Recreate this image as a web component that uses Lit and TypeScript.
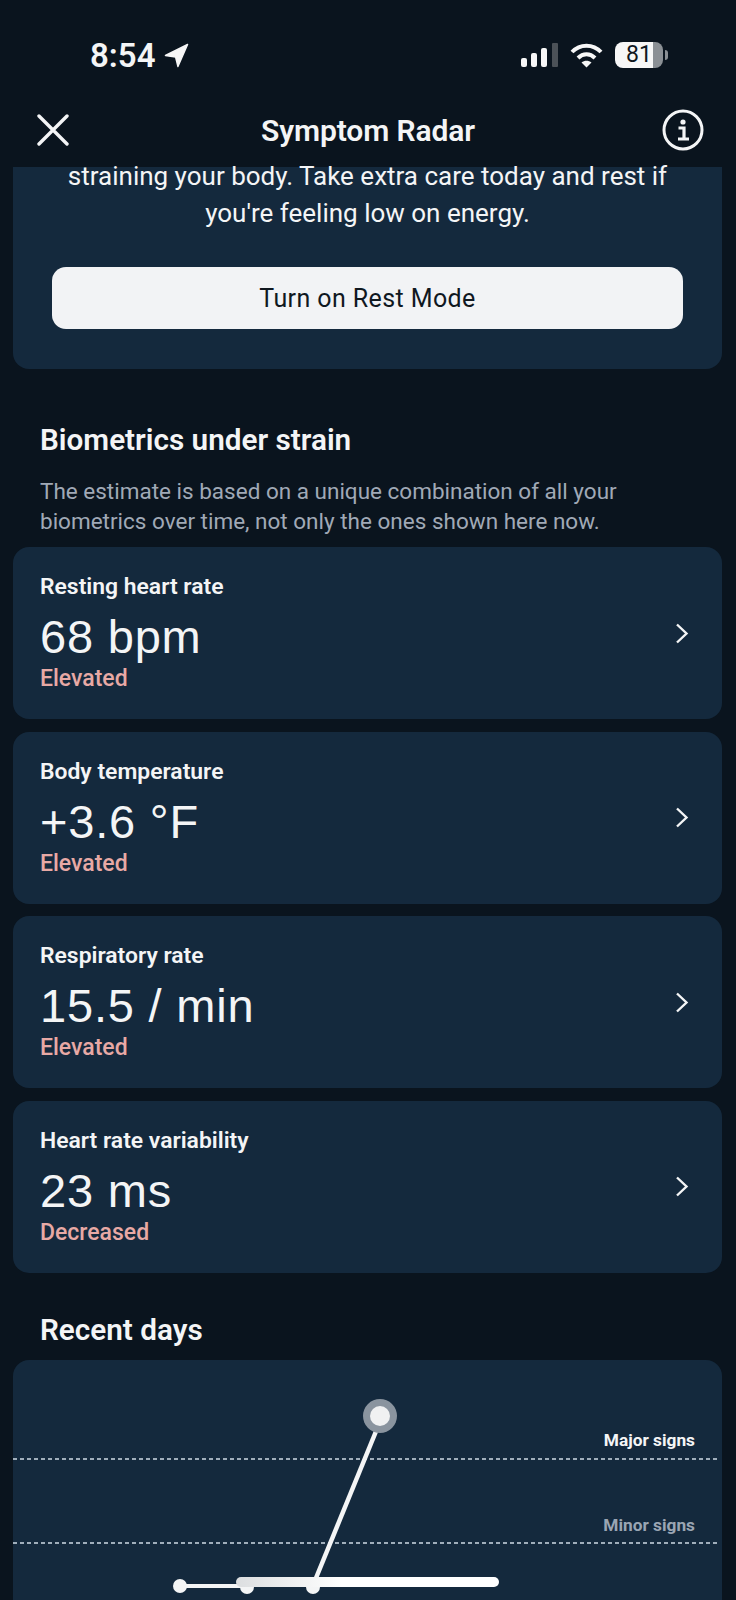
import { LitElement, html, css, svg } from "lit";
import { customElement } from "lit/decorators.js";

const metrics = [
  { label: "Resting heart rate", value: "68 bpm", status: "Elevated" },
  { label: "Body temperature", value: "+3.6 °F", status: "Elevated" },
  { label: "Respiratory rate", value: "15.5 / min", status: "Elevated" },
  { label: "Heart rate variability", value: "23 ms", status: "Decreased" },
];

@customElement("app-root")
export class AppRoot extends LitElement {
  static styles = css`
    :host {
      display: block;
      width: 736px;
      height: 1600px;
      overflow: hidden;
      background: #0a141e;
      color: #f4f5f6;
      font-family: Roboto, "Liberation Sans", sans-serif;
    }
    .status {
      height: 90px;
      display: flex;
      justify-content: space-between;
      align-items: center;
      padding: 20px 73px 0 90px;
      box-sizing: border-box;
    }
    .time {
      display: flex;
      align-items: center;
      gap: 8px;
      font-size: 33px;
      font-weight: 600;
    }
    .indicators {
      display: flex;
      align-items: center;
      gap: 12px;
    }
    .battery {
      position: relative;
      width: 48px;
      height: 26px;
      box-sizing: border-box;
      border-radius: 8px;
      background: linear-gradient(90deg, #f7f7f7 79%, #8b9095 79%);
      color: #10181f;
      font-size: 23px;
      line-height: 26px;
      padding-left: 11px;
    }
    .battery::after {
      content: "";
      position: absolute;
      right: -5px;
      top: 8px;
      width: 3px;
      height: 10px;
      border-radius: 0 3px 3px 0;
      background: #8b9095;
    }
    .nav {
      height: 77px;
      display: flex;
      align-items: center;
      justify-content: space-between;
      padding: 3px 32px 0 37px;
      box-sizing: border-box;
    }
    .nav h1 {
      margin: 0 0 0 5px;
      font-size: 30px;
      font-weight: 600;
      letter-spacing: -0.1px;
    }
    .card {
      margin: 0 14px 0 13px;
      background: #14293d;
      border-radius: 16px;
    }
    .alert {
      display: flow-root;
      height: 202px;
      border-radius: 0 0 16px 16px;
      text-align: center;
      box-sizing: border-box;
      padding: 0 39px;
    }
    .alert p {
      margin: -9px -20px 35px;
      font-size: 26px;
      line-height: 37px;
    }
    .alert .btn {
      height: 62px;
      border-radius: 14px;
      background: #f2f3f5;
      color: #10181f;
      display: flex;
      align-items: center;
      justify-content: center;
      font-size: 25px;
      letter-spacing: 0.4px;
    }
    h2 {
      margin: 0;
      font-size: 29.7px;
      line-height: 36px;
      font-weight: 600;
      padding-left: 40px;
    }
    .intro {
      margin: 0;
      padding: 18px 40px 11px;
      font-size: 22.5px;
      line-height: 30px;
      color: #a0a9b6;
    }
    .biometrics {
      padding-top: 53px;
    }
    .rows {
      display: grid;
      gap: 12.5px;
    }
    .row {
      height: 172px;
      display: flex;
      align-items: center;
      justify-content: space-between;
      box-sizing: border-box;
      padding: 0 33px 0 27px;
    }
    .row .text {
      padding-top: 1px;
    }
    .row .label {
      font-size: 22.9px;
      font-weight: 600;
      line-height: 26px;
    }
    .row .value {
      font-family: "Liberation Sans", Arial, sans-serif;
      font-size: 47px;
      letter-spacing: 0.8px;
      line-height: 52px;
      margin-top: 11px;
    }
    .row .state {
      font-size: 23px;
      font-weight: 500;
      line-height: 28px;
      margin-top: 2px;
      color: #e8a9a5;
    }
    .recent h2 {
      padding-top: 39.5px;
      padding-bottom: 12px;
    }
    .chart {
      height: 300px;
      border-radius: 16px 16px 0 0;
      position: relative;
    }
    .chart svg {
      position: absolute;
      inset: 0;
    }
    .tag {
      position: absolute;
      right: 27px;
      font-size: 17.3px;
      font-weight: 700;
      line-height: 24px;
    }
    .tag.major {
      top: 68px;
    }
    .tag.minor {
      top: 153px;
      color: #9aa5b3;
    }
  `;

  renderMetric(m: { label: string; value: string; status: string }) {
    return html`<div class="card row">
      <div class="text">
        <div class="label">${m.label}</div>
        <div class="value">${m.value}</div>
        <div class="state">${m.status}</div>
      </div>
      <svg width="14" height="21" viewBox="0 0 14 21" fill="none" stroke="#f4f5f6" stroke-width="2.4">
        <path d="M2 1.5 L11.5 10.5 L2 19.5" />
      </svg>
    </div>`;
  }

  renderChart() {
    // coordinates relative to the chart card (page x - 13, page y - 1360)
    return svg`<svg width="709" height="300" viewBox="0 0 709 300">
      <line x1="0" y1="99" x2="707" y2="99" stroke="#a0aebb" stroke-width="2" stroke-dasharray="4 3" />
      <line x1="0" y1="183" x2="707" y2="183" stroke="#a0aebb" stroke-width="2" stroke-dasharray="4 3" />
      <defs>
        <linearGradient id="fade" x1="0" x2="1" y1="0" y2="0">
          <stop offset="0" stop-color="#dcdee0" />
          <stop offset="0.4" stop-color="#ffffff" />
        </linearGradient>
      </defs>
      <line x1="167" y1="226" x2="234" y2="226" stroke="#f4f5f6" stroke-width="4" />
      <circle cx="167" cy="226" r="7" fill="#f4f5f6" />
      <circle cx="234" cy="227" r="7" fill="#f4f5f6" />
      <circle cx="300" cy="227" r="7" fill="#f4f5f6" />
      <rect x="223" y="217" width="263" height="10" rx="5" fill="url(#fade)" />
      <line x1="303" y1="218" x2="366" y2="64" stroke="#f4f5f6" stroke-width="4.5" />
      <circle cx="367" cy="56" r="17" fill="#8a949f" />
      <circle cx="367" cy="56" r="10" fill="#f0f1f2" />
    </svg>`;
  }

  render() {
    return html`
      <div class="status">
        <div class="time">
          8:54
          <svg width="25" height="25" viewBox="0 0 26 26" fill="#f7f7f7" stroke="#f7f7f7" stroke-width="1.5" stroke-linejoin="round">
            <path d="M24.5 1.5 L1.5 13 L12 14.5 L14.5 24.5 Z" />
          </svg>
        </div>
        <div class="indicators">
          <svg width="37" height="24" viewBox="0 0 37 24">
            <rect x="0" y="15" width="6" height="9" rx="2" fill="#f7f7f7" />
            <rect x="10" y="10" width="6" height="14" rx="2" fill="#f7f7f7" />
            <rect x="20" y="5" width="6" height="19" rx="2" fill="#f7f7f7" />
            <rect x="31" y="0" width="6" height="24" rx="1" fill="#4b5157" />
          </svg>
          <svg width="33" height="25" viewBox="0 0 33 25" fill="none" stroke="#f7f7f7" stroke-width="4">
            <path d="M2 9 C10 0.5 23 0.5 31 9" />
            <path d="M8 15 C13 10 20 10 25 15" />
            <path d="M16.5 24.5 L11.5 19.5 C14.5 17 18.5 17 21.5 19.5 Z" fill="#f7f7f7" stroke="none" />
          </svg>
          <div class="battery">81</div>
        </div>
      </div>
      <div class="nav">
        <svg width="32" height="32" viewBox="0 0 32 32" stroke="#f4f5f6" stroke-width="3.4" stroke-linecap="round">
          <path d="M2 2 L30 30 M30 2 L2 30" />
        </svg>
        <h1>Symptom Radar</h1>
        <svg width="42" height="42" viewBox="0 0 42 42" fill="none" stroke="#f4f5f6">
          <circle cx="21" cy="21" r="19" stroke-width="3" />
          <circle cx="21" cy="13" r="2.6" fill="#f4f5f6" stroke="none" />
          <path d="M16.5 19 H22 V29 M16 30 H27" stroke-width="3.2" />
        </svg>
      </div>
      <div class="card alert">
        <p>straining your body. Take extra care today and rest if<br />you're feeling low on energy.</p>
        <div class="btn">Turn on Rest Mode</div>
      </div>
      <section class="biometrics">
        <h2>Biometrics under strain</h2>
        <p class="intro">
          The estimate is based on a unique combination of all your<br />biometrics over time, not only the ones shown
          here now.
        </p>
        <div class="rows">${metrics.map((m) => this.renderMetric(m))}</div>
      </section>
      <section class="recent">
        <h2>Recent days</h2>
        <div class="card chart">
          ${this.renderChart()}
          <div class="tag major">Major signs</div>
          <div class="tag minor">Minor signs</div>
        </div>
      </section>
    `;
  }
}
